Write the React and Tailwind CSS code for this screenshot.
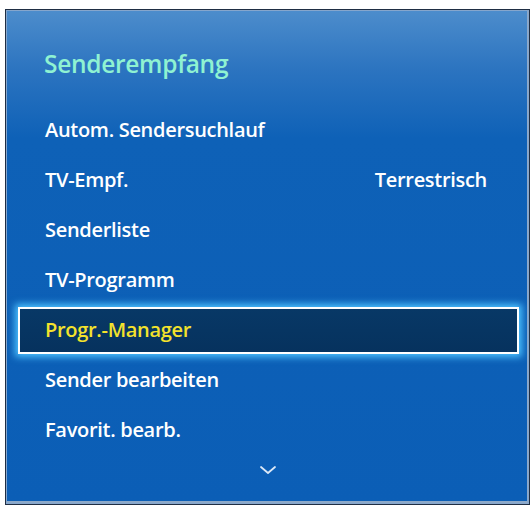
import React from 'react';

const items = [
  { label: 'Autom. Sendersuchlauf' },
  { label: 'TV-Empf.', value: 'Terrestrisch' },
  { label: 'Senderliste' },
  { label: 'TV-Programm' },
  { label: 'Progr.-Manager', active: true },
  { label: 'Sender bearbeiten' },
  { label: 'Favorit. bearb.' },
];

const Chevron = () => (
  <svg width="18" height="10" viewBox="0 0 18 10" fill="none">
    <path d="M2 2l7 6 7-6" stroke="#dbe8f7" strokeWidth="1.8" strokeLinecap="round" strokeLinejoin="round" />
  </svg>
);

export default function App() {
  return (
    <div className="w-[532px] h-[507px] bg-white pt-[9px] pl-[5px]" style={{ fontFamily: '"Open Sans", "Noto Sans", sans-serif' }}>
      <div className="w-[525px] h-[496px] border border-[#1f2e44] bg-[linear-gradient(180deg,#4d8dcc_0%,#2c74c0_12%,#0e61b7_26%,#0b5eb6_100%)] shadow-[inset_0_0_0_1px_#86a6cc,inset_-2px_-3px_0_0_#8da9c9] flex flex-col">
        <div className="pt-[31px] pl-[38px] h-[77px] text-[24.5px] leading-[46px] font-semibold text-[#8ff2d2] tracking-[-0.3px]">
          Senderempfang
        </div>
        <div className="mt-[18px] flex flex-col">
          {items.map((item) => (
            <div key={item.label} className="h-[50px] flex items-center">
              {item.active ? (
                <div className="ml-[12px] mr-[10px] flex-1 h-[47px] flex items-center border-2 border-white bg-[linear-gradient(180deg,#083866_0%,#06325e_100%)] shadow-[0_0_7px_3px_#4cc2ff] pl-[25px]">
                  <span className="text-[20px] font-semibold text-[#f3e22c] tracking-[-0.3px]">{item.label}</span>
                </div>
              ) : (
                <div className="flex-1 flex items-center justify-between pl-[39px] pr-[42px]">
                  <span className="text-[20px] font-semibold text-white tracking-[-0.3px]">{item.label}</span>
                  {item.value && (
                    <span className="text-[20px] font-semibold text-white tracking-[-0.3px]">{item.value}</span>
                  )}
                </div>
              )}
            </div>
          ))}
        </div>
        <div className="mt-[10px] flex justify-center">
          <Chevron />
        </div>
      </div>
    </div>
  );
}
